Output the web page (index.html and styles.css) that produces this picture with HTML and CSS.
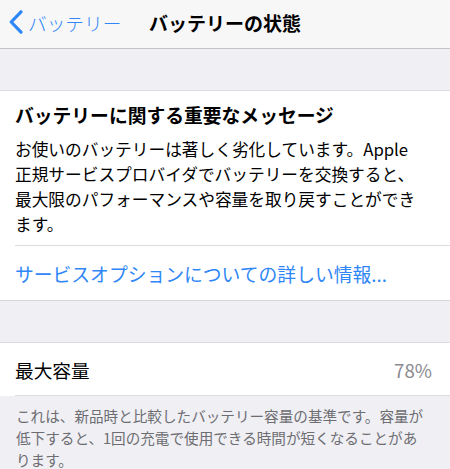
FILE: index.html
```html
<!DOCTYPE html>
<html lang="ja">
<head>
  <meta charset="UTF-8">
  <meta name="viewport" content="width=device-width, initial-scale=1.0">
  <title>バッテリーの状態</title>
  <link rel="stylesheet" href="styles.css">
</head>
<body>

  <header class="nav">
    <a class="nav-back" href="#">
      <svg class="chevron" width="14" height="24" viewBox="0 0 14 24" aria-hidden="true">
        <path d="M12 1.8 L2.2 12 L12 22.2" fill="none" stroke="currentColor" stroke-width="3.2" stroke-linecap="round" stroke-linejoin="round"/>
      </svg>
      <span>バッテリー</span>
    </a>
    <h1 class="nav-title">バッテリーの状態</h1>
  </header>

  <div class="spacer"></div>

  <section class="card">
    <div class="message">
      <h2 class="message-title">バッテリーに関する重要なメッセージ</h2>
      <p class="message-body">お使いのバッテリーは著しく劣化しています。Apple正規サービスプロバイダでバッテリーを交換すると、最大限のパフォーマンスや容量を取り戻すことができます。</p>
    </div>
    <a class="link-row" href="#">サービスオプションについての詳しい情報...</a>
  </section>

  <div class="spacer spacer-lower"></div>

  <section class="card">
    <div class="row">
      <span class="row-label">最大容量</span>
      <span class="row-value">78%</span>
    </div>
  </section>

  <p class="footnote">これは、新品時と比較したバッテリー容量の基準です。容量が低下すると、1回の充電で使用できる時間が短くなることがあります。</p>

</body>
</html>
```

FILE: styles.css
```css
* {
  box-sizing: border-box;
}
html, body {
  height: 100%;
}
body {
  margin: 0;
  background: #efeff4;
  font-family: "Noto Sans CJK JP", "Noto Sans", sans-serif;
  color: #000;
}
a {
  text-decoration: none;
}

/* navigation bar */
.nav {
  height: 49px;
  background: #f7f7f8;
  border-bottom: 1px solid #c4c4c8;
  display: grid;
  grid-template-columns: 1fr auto 1fr;
  align-items: center;
}
.nav-back {
  display: flex;
  align-items: center;
  gap: 5px;
  margin-left: 9px;
  color: #2f86f6;
  font-size: 18.7px;
  font-weight: 300;
  margin-top: -4px;
}
.chevron {
  flex: none;
}
.nav-title {
  margin: -4px 0 0;
  font-size: 19px;
  font-weight: 700;
}

.spacer {
  height: 42px;
  border-bottom: 1px solid #dcdce0;
}
.spacer-lower {
  height: 43px;
  border-top: 1px solid #d6d6da;
}

.card {
  background: #fff;
  padding-left: 15px;
}

.message {
  padding: 12px 29px 8px 0;
  border-bottom: 1px solid #dcdce0;
}
.message-title {
  margin: 0 0 10px;
  font-size: 18.8px;
  line-height: 24px;
  font-weight: 700;
}
.message-body {
  margin: 0;
  font-size: 16.7px;
  line-height: 25px;
}

.link-row {
  display: flex;
  align-items: center;
  height: 54px;
  color: #2f86f6;
  font-size: 18.8px;
}

.row {
  height: 53px;
  display: flex;
  align-items: center;
  justify-content: space-between;
  padding-right: 18px;
  border-bottom: 1px solid #dcdce0;
  font-size: 18.7px;
  padding-top: 1px;
}
.row-value {
  color: #8a8a8f;
}

.footnote {
  margin: 0;
  padding: 9px 20px 0 16px;
  font-size: 14.6px;
  line-height: 22px;
  color: #6d6d72;
}
```
